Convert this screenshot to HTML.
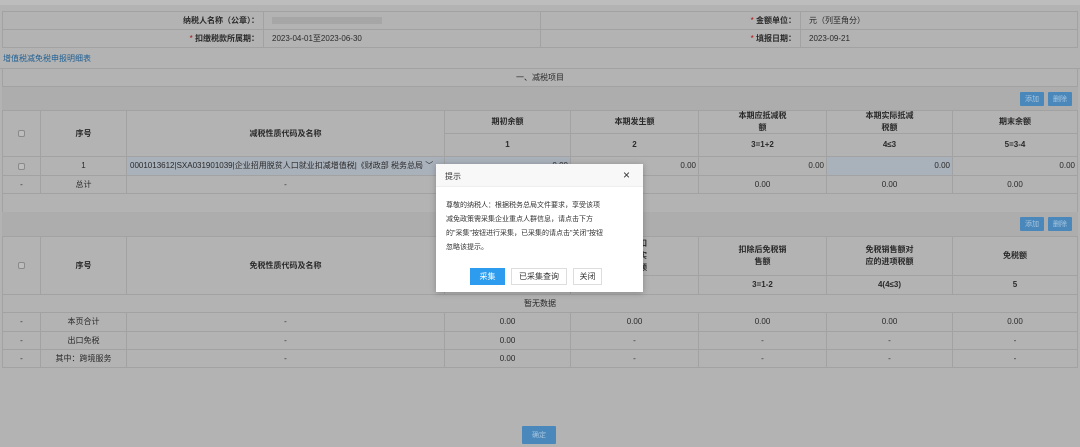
<!DOCTYPE html>
<html><head><meta charset="utf-8">
<style>
*{margin:0;padding:0;box-sizing:border-box}
body{width:1080px;height:447px;background:#b3b3b3;font-family:"Liberation Sans","Noto Sans CJK SC",sans-serif;font-size:8px;color:#2a2a2a;position:relative;overflow:hidden}
.a{position:absolute}
.c{position:absolute;border:1px solid #a2a2a2;display:flex;align-items:center;justify-content:center;text-align:center;line-height:12px}
.b{font-weight:bold}
.btn{position:absolute;background:#4a88bb;color:#a9c6de;font-size:7px;display:flex;align-items:center;justify-content:center;border-radius:1px}
.cb{width:7px;height:7px;border:1px solid #8a8a8a;border-radius:2px;background:#bdbdbd}
.r{color:#b01010}
</style></head><body>
<div class="a" style="left:0;top:0;width:1080px;height:5px;background:#bdbdbd"></div>
<div class="c" style="left:2px;top:11px;width:262px;height:19px;justify-content:flex-end;padding-right:4px"><span class="b">纳税人名称（公章）：</span></div>
<div class="c" style="left:263px;top:11px;width:278px;height:19px;justify-content:flex-start;padding-left:8px"><span style="display:inline-block;width:110px;height:7px;background:#a6a6a6"></span></div>
<div class="c" style="left:540px;top:11px;width:261px;height:19px;justify-content:flex-end;padding-right:4px"><span class="r">*</span>&nbsp;<span class="b">金额单位：</span></div>
<div class="c" style="left:800px;top:11px;width:278px;height:19px;justify-content:flex-start;padding-left:8px">元（列至角分）</div>
<div class="c" style="left:2px;top:29px;width:262px;height:19px;justify-content:flex-end;padding-right:4px"><span class="r">*</span>&nbsp;<span class="b">扣缴税款所属期：</span></div>
<div class="c" style="left:263px;top:29px;width:278px;height:19px;justify-content:flex-start;padding-left:8px">2023-04-01至2023-06-30</div>
<div class="c" style="left:540px;top:29px;width:261px;height:19px;justify-content:flex-end;padding-right:4px"><span class="r">*</span>&nbsp;<span class="b">填报日期：</span></div>
<div class="c" style="left:800px;top:29px;width:278px;height:19px;justify-content:flex-start;padding-left:8px">2023-09-21</div>
<div class="a" style="left:3px;top:53px;color:#1e5f93">增值税减免税申报明细表</div>
<div class="a" style="left:0;top:68px;width:1080px;height:1px;background:#a2a2a2"></div>
<div class="c" style="left:2px;top:68px;width:1076px;height:19px">一、减税项目</div>
<div class="a" style="left:2px;top:87px;width:1076px;height:23px;background:#adadad"></div>
<div class="btn" style="left:1020px;top:92px;width:24px;height:14px">添加</div>
<div class="btn" style="left:1048px;top:92px;width:24px;height:14px">删除</div>
<div class="c" style="left:2px;top:110px;width:39px;height:47px"><div class="cb"></div></div>
<div class="c b" style="left:40px;top:110px;width:87px;height:47px">序号</div>
<div class="c b" style="left:126px;top:110px;width:319px;height:47px">减税性质代码及名称</div>
<div class="c b" style="left:444px;top:110px;width:127px;height:24px">期初余额</div>
<div class="c b" style="left:570px;top:110px;width:129px;height:24px">本期发生额</div>
<div class="c b" style="left:698px;top:110px;width:129px;height:24px">本期应抵减税<br>额</div>
<div class="c b" style="left:826px;top:110px;width:127px;height:24px">本期实际抵减<br>税额</div>
<div class="c b" style="left:952px;top:110px;width:126px;height:24px">期末余额</div>
<div class="c b" style="left:444px;top:133px;width:127px;height:24px">1</div>
<div class="c b" style="left:570px;top:133px;width:129px;height:24px">2</div>
<div class="c b" style="left:698px;top:133px;width:129px;height:24px">3=1+2</div>
<div class="c b" style="left:826px;top:133px;width:127px;height:24px">4≤3</div>
<div class="c b" style="left:952px;top:133px;width:126px;height:24px">5=3-4</div>
<div class="c" style="left:2px;top:156px;width:39px;height:20px"><div class="cb"></div></div>
<div class="c" style="left:40px;top:156px;width:87px;height:20px">1</div>
<div class="c" style="left:126px;top:156px;width:319px;height:20px;background:#a9b1bb;justify-content:flex-start;padding-left:3px;white-space:nowrap;overflow:hidden">0001013612|SXA031901039|企业招用脱贫人口就业扣减增值税|《财政部 税务总局 ﹀</div>
<div class="c" style="left:444px;top:156px;width:127px;height:20px;background:#a9b1bb;justify-content:flex-end;padding-right:2px">0.00</div>
<div class="c" style="left:570px;top:156px;width:129px;height:20px;justify-content:flex-end;padding-right:2px">0.00</div>
<div class="c" style="left:698px;top:156px;width:129px;height:20px;justify-content:flex-end;padding-right:2px">0.00</div>
<div class="c" style="left:826px;top:156px;width:127px;height:20px;background:#a9b1bb;justify-content:flex-end;padding-right:2px">0.00</div>
<div class="c" style="left:952px;top:156px;width:126px;height:20px;justify-content:flex-end;padding-right:2px">0.00</div>
<div class="c" style="left:2px;top:175px;width:39px;height:19px">-</div>
<div class="c" style="left:40px;top:175px;width:87px;height:19px">总计</div>
<div class="c" style="left:126px;top:175px;width:319px;height:19px">-</div>
<div class="c" style="left:444px;top:175px;width:127px;height:19px">0.00</div>
<div class="c" style="left:570px;top:175px;width:129px;height:19px">0.00</div>
<div class="c" style="left:698px;top:175px;width:129px;height:19px">0.00</div>
<div class="c" style="left:826px;top:175px;width:127px;height:19px">0.00</div>
<div class="c" style="left:952px;top:175px;width:126px;height:19px">0.00</div>
<div class="c" style="left:2px;top:193px;width:1076px;height:20px"></div>
<div class="a" style="left:2px;top:212px;width:1076px;height:24px;background:#adadad"></div>
<div class="btn" style="left:1020px;top:217px;width:24px;height:14px">添加</div>
<div class="btn" style="left:1048px;top:217px;width:24px;height:14px">删除</div>
<div class="c" style="left:2px;top:236px;width:39px;height:59px"><div class="cb"></div></div>
<div class="c b" style="left:40px;top:236px;width:87px;height:59px">序号</div>
<div class="c b" style="left:126px;top:236px;width:319px;height:59px">免税性质代码及名称</div>
<div class="c b" style="left:444px;top:236px;width:127px;height:40px"></div>
<div class="c b" style="left:570px;top:236px;width:129px;height:40px;justify-content:flex-start;padding-left:60px">额扣<br>期实<br>除额</div>
<div class="c b" style="left:698px;top:236px;width:129px;height:40px">扣除后免税销<br>售额</div>
<div class="c b" style="left:826px;top:236px;width:127px;height:40px">免税销售额对<br>应的进项税额</div>
<div class="c b" style="left:952px;top:236px;width:126px;height:40px">免税额</div>
<div class="c b" style="left:444px;top:275px;width:127px;height:20px"></div>
<div class="c b" style="left:570px;top:275px;width:129px;height:20px"></div>
<div class="c b" style="left:698px;top:275px;width:129px;height:20px">3=1-2</div>
<div class="c b" style="left:826px;top:275px;width:127px;height:20px">4(4≤3)</div>
<div class="c b" style="left:952px;top:275px;width:126px;height:20px">5</div>
<div class="c" style="left:2px;top:294px;width:1076px;height:19px">暂无数据</div>
<div class="c" style="left:2px;top:312px;width:39px;height:20px">-</div>
<div class="c" style="left:40px;top:312px;width:87px;height:20px">本页合计</div>
<div class="c" style="left:126px;top:312px;width:319px;height:20px">-</div>
<div class="c" style="left:444px;top:312px;width:127px;height:20px">0.00</div>
<div class="c" style="left:570px;top:312px;width:129px;height:20px">0.00</div>
<div class="c" style="left:698px;top:312px;width:129px;height:20px">0.00</div>
<div class="c" style="left:826px;top:312px;width:127px;height:20px">0.00</div>
<div class="c" style="left:952px;top:312px;width:126px;height:20px">0.00</div>
<div class="c" style="left:2px;top:331px;width:39px;height:19px">-</div>
<div class="c" style="left:40px;top:331px;width:87px;height:19px">出口免税</div>
<div class="c" style="left:126px;top:331px;width:319px;height:19px">-</div>
<div class="c" style="left:444px;top:331px;width:127px;height:19px">0.00</div>
<div class="c" style="left:570px;top:331px;width:129px;height:19px">-</div>
<div class="c" style="left:698px;top:331px;width:129px;height:19px">-</div>
<div class="c" style="left:826px;top:331px;width:127px;height:19px">-</div>
<div class="c" style="left:952px;top:331px;width:126px;height:19px">-</div>
<div class="c" style="left:2px;top:349px;width:39px;height:19px">-</div>
<div class="c" style="left:40px;top:349px;width:87px;height:19px">其中：跨境服务</div>
<div class="c" style="left:126px;top:349px;width:319px;height:19px">-</div>
<div class="c" style="left:444px;top:349px;width:127px;height:19px">0.00</div>
<div class="c" style="left:570px;top:349px;width:129px;height:19px">-</div>
<div class="c" style="left:698px;top:349px;width:129px;height:19px">-</div>
<div class="c" style="left:826px;top:349px;width:127px;height:19px">-</div>
<div class="c" style="left:952px;top:349px;width:126px;height:19px">-</div>
<div class="btn" style="left:522px;top:426px;width:34px;height:18px">确定</div>
<div class="a" style="left:436px;top:164px;width:207px;height:128px;background:#fff;box-shadow:0 1px 6px rgba(0,0,0,.25)">
  <div class="a" style="left:0;top:0;width:207px;height:23px;background:#f8f8f8;border-bottom:1px solid #eee"></div>
  <div class="a" style="left:9px;top:7px;color:#333">提示</div>
  <div class="a" style="left:187px;top:4px;font-size:12px;color:#333">×</div>
  <div class="a" style="left:10px;top:35px;width:158px;line-height:14px;color:#333;font-size:7px">尊敬的纳税人：根据税务总局文件要求，享受该项减免政策需采集企业重点人群信息，请点击下方的"采集"按钮进行采集，已采集的请点击"关闭"按钮忽略该提示。</div>
  <div class="a" style="left:34px;top:104px;width:35px;height:17px;background:#2d9cef;color:#fff;display:flex;align-items:center;justify-content:center">采集</div>
  <div class="a" style="left:75px;top:104px;width:56px;height:17px;border:1px solid #ddd;color:#333;display:flex;align-items:center;justify-content:center">已采集查询</div>
  <div class="a" style="left:137px;top:104px;width:29px;height:17px;border:1px solid #ddd;color:#333;display:flex;align-items:center;justify-content:center">关闭</div>
</div>
</body></html>
